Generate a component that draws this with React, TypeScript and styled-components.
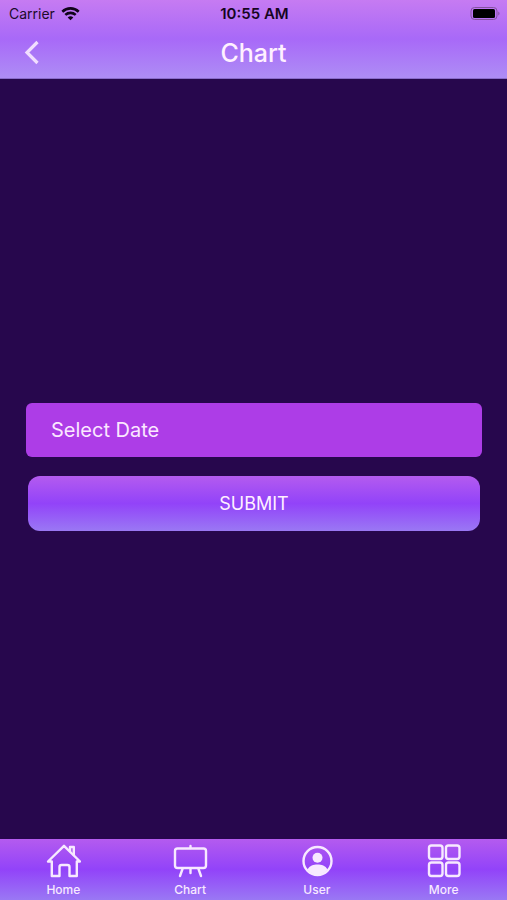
import React from "react";
import styled, { createGlobalStyle } from "styled-components";

const GlobalStyle = createGlobalStyle`
  * { box-sizing: border-box; }
  body { margin: 0; background: #27074d; }
  button, input { font: inherit; }
`;

const Screen = styled.div`
  display: flex;
  flex-direction: column;
  min-height: 100vh;
  background: #27074d;
  color: #fbf0ff;
  font-family: Inter, "Liberation Sans", sans-serif;
`;

const Header = styled.header`
  background: linear-gradient(180deg, #c67bf2 0%, #a869f8 50%, #ae8df5 100%);
  border-bottom: 1px solid #8a6ccb;
`;

const StatusBar = styled.div`
  display: grid;
  grid-template-columns: 1fr auto 1fr;
  align-items: center;
  height: 27px;
  padding: 0 7px 0 9px;
  color: #1c0b2b;
  font-size: 14px;
  line-height: 20px;
`;

const Carrier = styled.div`
  display: flex;
  align-items: center;
  gap: 6px;
`;

const Time = styled.time`
  color: #16051f;
  font-size: 15px;
  font-weight: 600;
`;

const BatterySlot = styled.div`
  display: flex;
  justify-content: flex-end;
`;

const TitleBar = styled.div`
  display: grid;
  grid-template-columns: 64px 1fr 64px;
  align-items: center;
  height: 51px;
`;

const BackButton = styled.button`
  display: flex;
  align-items: center;
  justify-content: center;
  height: 48px;
  padding: 0;
  border: 0;
  background: none;
  color: #f1defe;
`;

const Title = styled.h1`
  margin: 0;
  color: #fff0ff;
  font-size: 25px;
  font-weight: 500;
  line-height: 32px;
  text-align: center;
`;

const Form = styled.form`
  display: flex;
  flex: 1;
  flex-direction: column;
  justify-content: center;
  gap: 19px;
  padding: 16px 25px 0 26px;
`;

const DateField = styled.input`
  width: 100%;
  height: 54px;
  padding: 0 25px;
  border: 0;
  border-radius: 6px;
  outline: 0;
  background: #ad3de7;
  color: #fbe8ff;
  font-size: 20px;
  &::placeholder { color: #fbe8ff; opacity: 1; }
`;

const SubmitButton = styled.button`
  height: 55px;
  margin: 0 2px;
  padding: 0;
  border: 0;
  border-radius: 12px;
  background: linear-gradient(180deg, #b45bef 0%, #9243f9 50%, #9a78f4 100%);
  color: #fff0ff;
  font-size: 18px;
`;

const TabBar = styled.nav`
  display: grid;
  grid-template-columns: repeat(4, 1fr);
  height: 61px;
  background: linear-gradient(180deg, #b45bef 0%, #9243f9 50%, #9a78f4 100%);
`;

const Tab = styled.a`
  display: flex;
  flex-direction: column;
  align-items: center;
  gap: 3px;
  padding-top: 4px;
  color: #f7e9ff;
  font-size: 12px;
  font-weight: 500;
  line-height: 16px;
  text-decoration: none;
`;

const TabIcon = styled.svg`
  width: 36px;
  height: 36px;
  fill: none;
  stroke: currentColor;
  stroke-width: 2.4;
  stroke-linecap: round;
  stroke-linejoin: round;
`;

const tabs = [
  {
    label: "Home",
    icon: (
      <>
        <path d="M3 18.5 19 2.8l16 15.700h-3.200V33h-7.300V24a2 2 0 0 0-2-2h-6a2 2 0 0 0-2 2v9H6.800V18.500Z" />
        <path d="M25 8V4h3.800v8" />
      </>
    ),
  },
  {
    label: "Chart",
    icon: (
      <>
        <rect x="3" y="5.5" width="31" height="19.5" rx="2.5" />
        <path d="M18.5 3v2M18.5 26v4M10.500 26l-2.500 7M26.500 26l2.500 7" />
      </>
    ),
  },
  {
    label: "User",
    icon: (
      <>
        <circle cx="18.5" cy="18" r="14" />
        <circle cx="18.5" cy="14.8" r="5" fill="currentColor" stroke="none" />
        <path
          d="M8.500 26.500c2-3.900 6-5 10-5s8 1.100 10 5C26 30 22.500 31.500 18.500 31.500s-7.500-1.500-10-5Z"
          fill="currentColor"
          stroke="none"
        />
      </>
    ),
  },
  {
    label: "More",
    icon: (
      <>
        <rect x="3" y="2.5" width="13.5" height="13.5" rx="2.5" />
        <rect x="20" y="2.5" width="13.5" height="13.5" rx="2.5" />
        <rect x="3" y="19.5" width="13.5" height="13.5" rx="2.5" />
        <rect x="20" y="19.5" width="13.5" height="13.5" rx="2.5" />
      </>
    ),
  },
];

function WifiIcon() {
  return (
    <svg width="19" height="14" viewBox="0 0 19 14" aria-hidden="true">
      <g fill="none" stroke="#10031a" strokeWidth="2.6">
        <path d="M1.3 4.700C6 .3 13 .3 17.700 4.700" />
        <path d="M4.300 7.900c3-2.700 7.400-2.700 10.400 0" />
      </g>
      <path d="M6.700 10.400c1.700-1.500 3.900-1.500 5.600 0L9.500 13.200Z" fill="#10031a" />
    </svg>
  );
}

function BatteryIcon() {
  return (
    <svg width="30" height="14" viewBox="0 0 30 14" role="img" aria-label="Battery full">
      <rect x="1" y="0.5" width="26" height="12" rx="3.5" fill="none" stroke="#85529f" />
      <rect x="3" y="2" width="22" height="9" rx="1.5" fill="#000" />
      <path d="M28.300 4.500v4c1.600-.7 1.600-3.300 0-4Z" fill="#85529f" />
    </svg>
  );
}

export default function App() {
  return (
    <>
      <GlobalStyle />
      <Screen>
        <Header>
          <StatusBar>
            <Carrier>
              Carrier
              <WifiIcon />
            </Carrier>
            <Time>10:55 AM</Time>
            <BatterySlot>
              <BatteryIcon />
            </BatterySlot>
          </StatusBar>
          <TitleBar>
            <BackButton type="button" aria-label="Back">
              <svg width="16" height="26" viewBox="0 0 16 26" aria-hidden="true">
                <path d="M13.500 2 3 12.500l10.500 10.500" fill="none" stroke="currentColor" strokeWidth="3.2" />
              </svg>
            </BackButton>
            <Title>Chart</Title>
          </TitleBar>
        </Header>
        <Form onSubmit={(event) => event.preventDefault()}>
          <DateField type="text" placeholder="Select Date" aria-label="Select Date" readOnly />
          <SubmitButton type="submit">SUBMIT</SubmitButton>
        </Form>
        <TabBar aria-label="Main">
          {tabs.map((tab) => (
            <Tab key={tab.label} href={`#${tab.label.toLowerCase()}`}>
              <TabIcon viewBox="0 0 36 36" aria-hidden="true">
                {tab.icon}
              </TabIcon>
              {tab.label}
            </Tab>
          ))}
        </TabBar>
      </Screen>
    </>
  );
}
